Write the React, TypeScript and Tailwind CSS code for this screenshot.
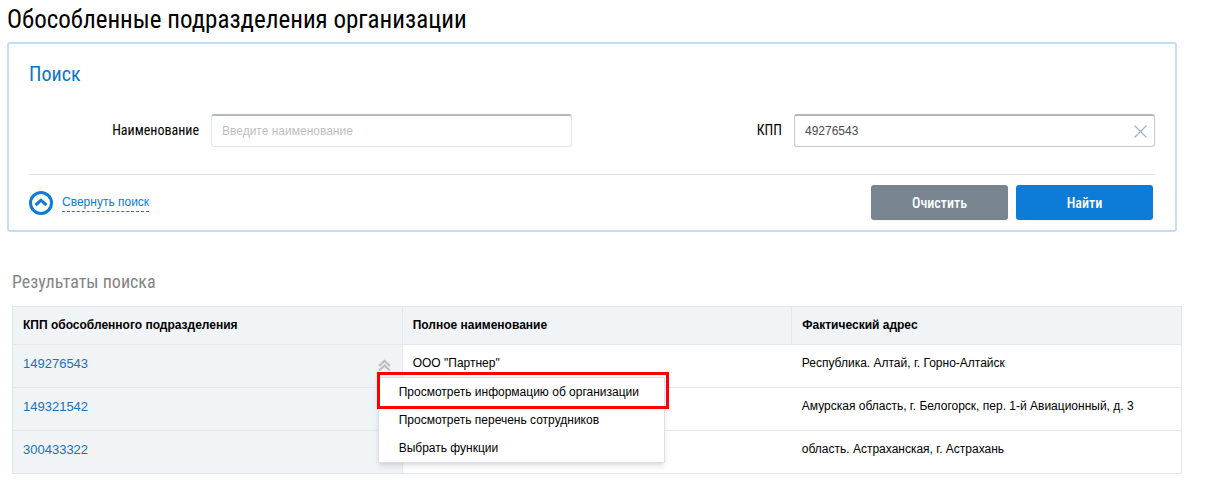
import { useState } from 'react';

const rows = [
    { kpp: '149276543', name: 'ООО "Партнер"', address: 'Республика. Алтай, г. Горно-Алтайск' },
    { kpp: '149321542', name: '', address: 'Амурская область, г. Белогорск, пер. 1-й Авиационный, д. 3' },
    { kpp: '300433322', name: '', address: 'область. Астраханская, г. Астрахань' },
];

const menuItems = ['Просмотреть информацию об организации', 'Просмотреть перечень сотрудников', 'Выбрать функции'];

function RowMenu() {
    return (
        <div className="relative pt-1">
            <button type="button" aria-label="Действия" className="block">
                <svg className="block" width="13" height="13" viewBox="0 0 13 13" fill="none" stroke="#b9bdc0" strokeWidth="2">
                    <path d="M1 7 6.5 1.8 12 7M1 11.6 6.5 6.4 12 11.6" />
                </svg>
            </button>
            <ul className="absolute left-0 top-full z-10 mt-[5px] w-[287px] border border-[#dfe1ea] bg-white shadow-md">
                {menuItems.map((item, i) => (
                    <li key={item} className="relative">
                        <button type="button" className="block w-full px-5 text-left text-xs leading-7 text-black">
                            {item}
                        </button>
                        {i === 0 && (
                            <span className="pointer-events-none absolute -bottom-[3px] -left-0.5 -right-[5px] -top-1.5 border-3 border-[#ff0000]" />
                        )}
                    </li>
                ))}
            </ul>
        </div>
    );
}

export default function App() {
    const [name, setName] = useState('');
    const [kpp, setKpp] = useState('49276543');

    const clear = () => {
        setName('');
        setKpp('');
    };

    return (
        <main className="bg-white pb-2.5 pl-[7px] pr-11 font-['Liberation_Sans',Arial,sans-serif] text-xs text-black">
            <h1 className="pb-1 pt-0.5 font-['Roboto_Condensed','Liberation_Sans_Narrow',sans-serif] text-[25px] leading-9">
                Обособленные подразделения организации
            </h1>

            <form
                className="mr-[5px] rounded-[3px] border-2 border-[#c1dff6] px-5 pb-2.5 pt-4"
                onSubmit={(e) => e.preventDefault()}
            >
                <h2 className="font-['Roboto_Condensed','Liberation_Sans_Narrow',sans-serif] text-xl leading-7 text-[#0a75c2]">
                    Поиск
                </h2>

                <div className="grid grid-cols-2 gap-10 pb-[27px] pt-[26px]">
                    <div className="flex items-center">
                        <label
                            htmlFor="name"
                            className="w-[182px] shrink-0 pb-0.5 pr-3 text-right font-['Roboto_Condensed','Liberation_Sans_Narrow',sans-serif] text-sm"
                        >
                            Наименование
                        </label>
                        <input
                            id="name"
                            type="text"
                            value={name}
                            onChange={(e) => setName(e.target.value)}
                            placeholder="Введите наименование"
                            className="h-[33px] w-full min-w-0 rounded-[3px] border border-t-2 border-[#e1e6ea] border-t-[#b2b9bd] px-2.5 text-[#4b4b4b] placeholder:text-[#bfbfbf]"
                        />
                    </div>
                    <div className="flex items-center">
                        <label
                            htmlFor="kpp"
                            className="w-[182px] shrink-0 pb-0.5 pr-3 text-right font-['Roboto_Condensed','Liberation_Sans_Narrow',sans-serif] text-sm"
                        >
                            КПП
                        </label>
                        <div className="relative w-full">
                            <input
                                id="kpp"
                                type="text"
                                value={kpp}
                                onChange={(e) => setKpp(e.target.value)}
                                className="block h-[33px] w-full rounded-[3px] border border-t-2 border-[#c8c8c8] border-t-[#b5b5b5] px-2.5 text-[#4b4b4b]"
                            />
                            <button
                                type="button"
                                aria-label="Очистить КПП"
                                className="absolute right-2 top-[11px]"
                                onClick={() => setKpp('')}
                            >
                                <svg className="block" width="13" height="13" viewBox="0 0 13 13" stroke="#9db6c9" strokeWidth="1.2">
                                    <path d="M.5.5l12 12M12.5.5l-12 12" />
                                </svg>
                            </button>
                        </div>
                    </div>
                </div>

                <div className="flex items-center justify-between border-t border-[#dfe1e2] pr-0.5 pt-2.5">
                    <button type="button" className="flex items-center gap-[9px] text-[#0d7cd6]">
                        <svg width="24" height="24" viewBox="0 0 24 24" fill="none" stroke="#0d7cd6" strokeWidth="3">
                            <circle cx="12" cy="12" r="10.5" />
                            <path d="M6.6 14.2 12 9.2l5.4 5" />
                        </svg>
                        <span className="border-b border-dashed border-[#0d7cd6] leading-[18px]">Свернуть поиск</span>
                    </button>
                    <div className="flex gap-2 font-['Roboto_Condensed','Liberation_Sans_Narrow',sans-serif] text-sm font-medium text-white">
                        <button
                            type="button"
                            className="h-[35px] w-[137px] rounded-[3px] bg-[#788590] shadow-xs"
                            onClick={clear}
                        >
                            Очистить
                        </button>
                        <button type="submit" className="h-[35px] w-[137px] rounded-[3px] bg-[#0d7cd8] shadow-xs">
                            Найти
                        </button>
                    </div>
                </div>
            </form>

            <section className="ml-[5px] pt-9">
                <h2 className="pb-2.5 font-['Roboto_Condensed','Liberation_Sans_Narrow',sans-serif] text-lg leading-7 text-[#858585]">
                    Результаты поиска
                </h2>
                <table className="w-full table-fixed border-collapse text-left">
                    <thead>
                        <tr className="h-[38px] bg-[#f0f4f7]">
                            <th className="border border-[#e3e8ec] px-2.5 pb-0.5">КПП обособленного подразделения</th>
                            <th className="border border-[#e3e8ec] px-2.5 pb-0.5">Полное наименование</th>
                            <th className="border border-[#e3e8ec] px-2.5 pb-0.5">Фактический адрес</th>
                        </tr>
                    </thead>
                    <tbody>
                        {rows.map((row, i) => (
                            <tr key={row.kpp} className="h-[43px] border border-[#e3e8ec] align-top">
                                <td className="bg-[#f0f4f7] pl-2.5 pr-[11px] pt-2.5">
                                    <div className="flex h-4 items-start justify-between">
                                        <a href="#" className="text-[13px] leading-[18px] text-[#1f6fb5]">
                                            {row.kpp}
                                        </a>
                                        {i === 0 && <RowMenu />}
                                    </div>
                                </td>
                                <td className="border-l border-[#e3e8ec] px-2.5 pt-2.5">{row.name}</td>
                                <td className="px-2.5 pt-2.5">{row.address}</td>
                            </tr>
                        ))}
                    </tbody>
                </table>
            </section>
        </main>
    );
}
